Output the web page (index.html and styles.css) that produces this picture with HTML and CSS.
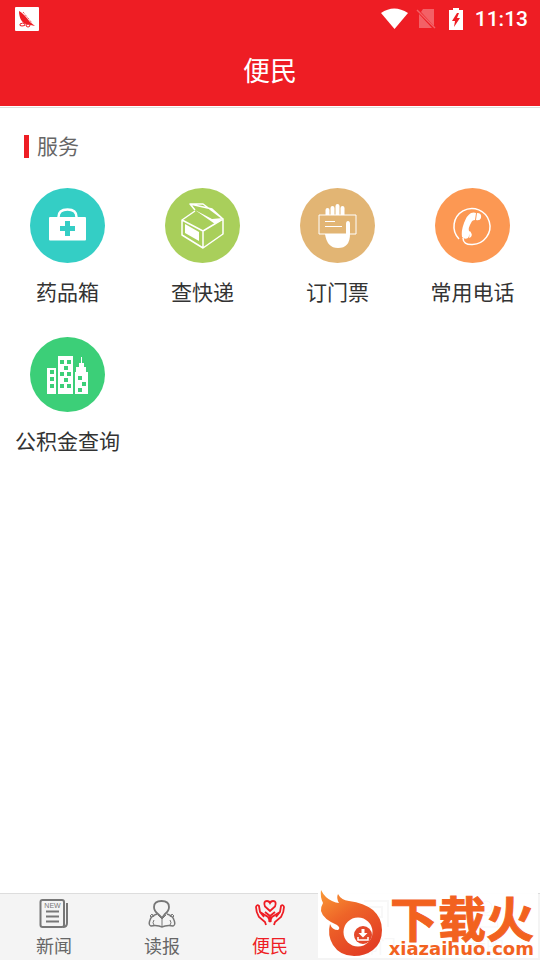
FILE: index.html
```html
<!DOCTYPE html>
<html lang="zh-CN">
<head>
    <meta charset="UTF-8">
    <meta name="viewport" content="width=device-width, initial-scale=1">
    <title>便民</title>
    <link rel="stylesheet" href="styles.css">
</head>
<body>

<header class="header">
    <div class="status">
        <svg class="app-logo" viewBox="0 0 24 24" width="24" height="24">
            <rect width="24" height="24" rx="1" fill="#fff"/>
            <path d="M4 4c3 1 9 8 11 11l5 4-9-2c-4-1-7-6-7-13z" fill="#ee1d24"/>
            <path d="M5 17q3-2 5 0 1 2-3 2-3 0-2-2zM11 18q2-2 4 0 0 2-2 2t-2-2z" fill="#fff" stroke="#ee1d24"/>
            <path d="M8 5l9 11" stroke="#ee1d24" stroke-dasharray="1 1"/>
        </svg>
        <div class="status-right">
            <svg viewBox="0 0 27 22" width="27" height="22"><path d="M0 5Q13-4 27 5L13.500 21z" fill="#fff"/></svg>
            <svg viewBox="0 0 20 22" width="20" height="22" class="sim">
                <path d="M7 1h11v17L5 4zM3 6l13 14H3z" fill="#fff"/>
                <path d="M1 2l18 18" stroke="#fff" stroke-width="1.500"/>
            </svg>
            <svg viewBox="0 0 14 22" width="14" height="22">
                <path d="M0 2h4V0h6v2h4v20H0z" fill="#fff"/>
                <path d="M8 5L3 13h3l-1 6 6-9H8l2-5z" fill="#ee1d24"/>
            </svg>
            <span class="time">11:13</span>
        </div>
    </div>
    <h1 class="title">便民</h1>
</header>

<main class="content">
    <h2 class="section-title">服务</h2>
    <div class="services">
        <a class="service" href="#">
            <svg class="service-icon" viewBox="0 0 75 75">
                <circle cx="37.500" cy="37.500" r="37.500" fill="#34cec5"/>
                <path d="M28.500 30v-1q0-7.500 9-7.500t9 7.500v1" fill="none" stroke="#fff" stroke-width="2.500"/>
                <rect x="19" y="29" width="37" height="23.500" rx="1" fill="#fff"/>
                <path d="M35 33h5v5h5v5h-5v5h-5v-5h-5v-5h5z" fill="#34cec5"/>
            </svg>
            <span>药品箱</span>
        </a>
        <a class="service" href="#">
            <svg class="service-icon" viewBox="0 0 75 75">
                <circle cx="37.500" cy="37.500" r="37.500" fill="#a9cf5b"/>
                <g fill="none" stroke="#fff" stroke-width="1.500" stroke-linejoin="round">
                    <path d="M30 23L17 32v15l21 13 20-14V31L38 43 17 32M38 43v17"/>
                    <path d="M25 16h22l11 15-8 1-20-10z" fill="#a9cf5b" stroke="none"/>
                    <path d="M58 31L47 21 25 16l5 6M25 16h13l20 15"/>
                </g>
                <path d="M30 22l17 9 11-1-8 6zM20 36l14 8v9l-14-8z" fill="#fff"/>
            </svg>
            <span>查快递</span>
        </a>
        <a class="service" href="#">
            <svg class="service-icon" viewBox="0 0 75 75">
                <circle cx="37.500" cy="37.500" r="37.500" fill="#e2b574"/>
                <path d="M25.500 27v-5q0-2 2-2t2 2v5h1v-7q0-2 2-2t2 2v7h1v-9q0-2 2-2t2 2v9h1v-7q0-2 2-2t2 2v7z" fill="#fff"/>
                <path d="M19 27h37v19H19z" fill="none" stroke="#fff"/>
                <path d="M25 33.500h10M25 38.500h17" stroke="#fff"/>
                <path d="M25 46h21V36q0-3 2-3t2 3v10q0 14-12 14-11 0-13-14z" fill="#fff"/>
            </svg>
            <span>订门票</span>
        </a>
        <a class="service" href="#">
            <svg class="service-icon" viewBox="0 0 75 75">
                <circle cx="37.500" cy="37.500" r="37.500" fill="#fc9853"/>
                <path d="M24 51A18 18 0 1 1 37.500 56.500Q28 57 28 50" fill="none" stroke="#fff" stroke-width="1.500"/>
                <path d="M36 25q3-1 5 0l-1 7q-3 0-4 3-3 5-2 8l2 1-3 6q-3 2-6-1-1-6 2-14 3-8 7-10z" fill="#fff"/>
                <path d="M42 25q5 0 4 5-1 3-5 2zM35 44q3 2 1 5l-2 1z" fill="#fff"/>
            </svg>
            <span>常用电话</span>
        </a>
        <a class="service" href="#">
            <svg class="service-icon" viewBox="0 0 75 75">
                <circle cx="37.500" cy="37.500" r="37.500" fill="#3ccf78"/>
                <path d="M17 31h9v26h-9zM28 19h15v38H28zM45 57V35h1v-5h3v-4h2v-6h1v6h2v4h2v5h2v22z" fill="#fff"/>
                <path d="M20 33h4v4h-4zM20 40h4v4h-4zM20 47h4v4h-4zM30 23h4v4h-4zM37 23h4v4h-4zM34 29h4v4h-4zM30 35h4v4h-4zM37 35h4v4h-4zM34 41h4v4h-4zM30 47h4v4h-4zM37 47h4v4h-4zM48 39h4v4h-4zM52 45h4v4h-4zM48 51h4v4h-4z" fill="#3ccf78"/>
            </svg>
            <span>公积金查询</span>
        </a>
    </div>
</main>

<nav class="tabbar">
    <a class="tab" href="#">
        <svg class="tab-icon" viewBox="0 0 30 30">
            <rect x="1.500" y="1" width="23.500" height="27" rx="2" stroke-width="2"/>
            <path d="M28 4v20q0 4-4 4" stroke-width="2"/>
            <path d="M7 12.500h13M7 17.500h13M7 22.500h13" stroke-width="2"/>
            <text x="13.500" y="9" class="news-text">NEW</text>
        </svg>
        <span>新闻</span>
    </a>
    <a class="tab" href="#">
        <svg class="tab-icon" viewBox="0 0 30 30">
            <path d="M11 15q-4-3-4-7 0-6 7.500-6T22 8q0 4-4 7l-3 4z" stroke-width="1.800"/>
            <path d="M10 15q-6 2-7 6-2 5 1 6 4-1 8 0l3 1 3-1q4-1 8 0 3-1 1-6-1-4-7-6" stroke-width="1.500"/>
            <path d="M15 19v9M7 18l-2-3-2 2 2 2M23 18l2-3 2 2-2 2M7 21q-2 3 0 5M23 21q2 3 0 5M11 16l4 4 4-4"/>
        </svg>
        <span>读报</span>
    </a>
    <a class="tab active" href="#">
        <svg class="tab-icon" viewBox="0 0 30 30">
            <path d="M15 12L10 7.500Q8 2 12 2q2 0 3 2 1-2 3-2 4 0 2 5.500z" stroke-width="1.800"/>
            <path d="M11 26l-1-3-6-5q-3-5-3-10 1-3 3-1l1 6 8 5q2 3 1 5M5 13l4 5M10 13l5 4v5M19 26l1-3 6-5q3-5 3-10-1-3-3-1l-1 6-8 5q-2 3-1 5M25 13l-4 5M20 13l-5 4" stroke-width="1.800"/>
        </svg>
        <span>便民</span>
    </a>
    <a class="tab" href="#">
        <svg class="tab-icon" viewBox="0 0 30 30"><path d="M1 2h24v26M7 8h12v10H7z" stroke-width="2"/></svg>
        <span>部门</span>
    </a>
    <a class="tab" href="#">
        <svg class="tab-icon" viewBox="0 0 30 30"><circle cx="15" cy="8" r="6"/><path d="M3 28q0-12 12-12t12 12z"/></svg>
        <span>我的</span>
    </a>

    <div class="watermark">
        <svg class="flame" viewBox="0 0 65 68" width="65" height="68">
            <defs>
                <linearGradient id="fire" x1="0" y1="0" x2=".6" y2="1">
                    <stop offset="0" stop-color="#fa9a36"/>
                    <stop offset=".45" stop-color="#ee6428"/>
                    <stop offset="1" stop-color="#e33f24"/>
                </linearGradient>
            </defs>
            <path d="M3 0Q7 8 14 11q4 2 7 2-3-5-1-9 3 6 11 7 15 2 24 9 9 8 9 20 0 13-9 20-8 6-19 6-14 0-21-11-6-10-3-21 2 6 8 6 3-2-1-5Q5 29 3 21q0-5 2-8Q2 7 3 0z" fill="url(#fire)"/>
            <circle cx="40" cy="42" r="14.500" fill="#fff"/>
            <circle cx="45" cy="45" r="9" fill="#e4482a"/>
            <path d="M43.500 39h3v4h3L45 47.500 40.500 43h3z" fill="#fff"/>
            <path d="M40 47v3h10v-3" fill="none" stroke="#fff" stroke-width="1.500"/>
        </svg>
        <div class="brand">
            <div class="brand-name">下载火</div>
            <div class="brand-url">xiazaihuo.com</div>
        </div>
    </div>
</nav>

</body>
</html>
```
FILE: styles.css
```css
* {
    box-sizing: border-box;
}

body {
    margin: 0;
    min-height: 100vh;
    display: flex;
    flex-direction: column;
    background: #fff;
    color: #333;
    font-family: "Noto Sans CJK SC", sans-serif;
}

a {
    color: inherit;
    text-decoration: none;
}

svg {
    display: block;
    flex: none;
}

/* header */
.header {
    background: #ee1d24;
    color: #fff;
    border-bottom: 1px solid #ddd;
    box-shadow: inset 0 -1px #fff;
}

.status {
    display: flex;
    justify-content: space-between;
    align-items: center;
    height: 38px;
    padding: 0 12px 0 15px;
}

.status-right {
    display: flex;
    align-items: center;
    gap: 8px;
}

.sim {
    opacity: 0.3;
    margin-right: 5px;
}

.time {
    margin-left: 4px;
    font-family: Roboto, sans-serif;
    font-size: 21px;
    font-weight: 500;
}

.title {
    margin: 0;
    padding-bottom: 5px;
    font-size: 27px;
    font-weight: 400;
    line-height: 64px;
    text-align: center;
}

/* services */
.content {
    flex: 1;
    padding-top: 27px;
}

.section-title {
    margin: 0 24px 30px;
    padding: 0 0 2px 8px;
    border-left: 5px solid #ee1d24;
    color: #666;
    font-size: 21px;
    font-weight: 400;
    line-height: 21px;
}

.services {
    display: grid;
    grid-template-columns: repeat(4, 1fr);
    row-gap: 31px;
}

.service {
    display: flex;
    flex-direction: column;
    align-items: center;
    gap: 13px;
    font-size: 21px;
    line-height: 30px;
    white-space: nowrap;
}

.service-icon {
    width: 75px;
    height: 75px;
}

/* bottom tabs */
.tabbar {
    position: relative;
    display: flex;
    height: 67px;
    border-top: 1px solid #ddd;
    background: #f4f4f4;
}

.tab {
    flex: 1;
    display: flex;
    flex-direction: column;
    align-items: center;
    gap: 5px;
    padding-top: 5px;
    color: #666;
    font-size: 18px;
    line-height: 22px;
}

.tab-icon {
    width: 30px;
    height: 30px;
    fill: none;
    stroke: #777;
}

.news-text {
    fill: #777;
    stroke: none;
    font-family: "Liberation Sans", sans-serif;
    font-size: 7px;
    text-anchor: middle;
}

.active {
    color: #ee1d24;
}

.active .tab-icon {
    stroke: #ee1d24;
}

.watermark {
    position: absolute;
    right: 2px;
    bottom: 2px;
    display: flex;
    width: 220px;
    height: 68px;
    background: rgba(255, 255, 255, 0.95);
    color: #f2621f;
    white-space: nowrap;
}

.brand {
    flex: 1;
    display: flex;
    flex-direction: column;
    align-items: flex-end;
    justify-content: space-between;
    padding: 8px 4px 0 0;
}

.brand-name {
    font-size: 48px;
    font-weight: 700;
    line-height: 36px;
    -webkit-text-stroke: 1px #f2621f;
}

.brand-url {
    font-family: "DejaVu Sans", sans-serif;
    font-size: 18px;
    font-weight: 700;
    line-height: 18px;
}
```
